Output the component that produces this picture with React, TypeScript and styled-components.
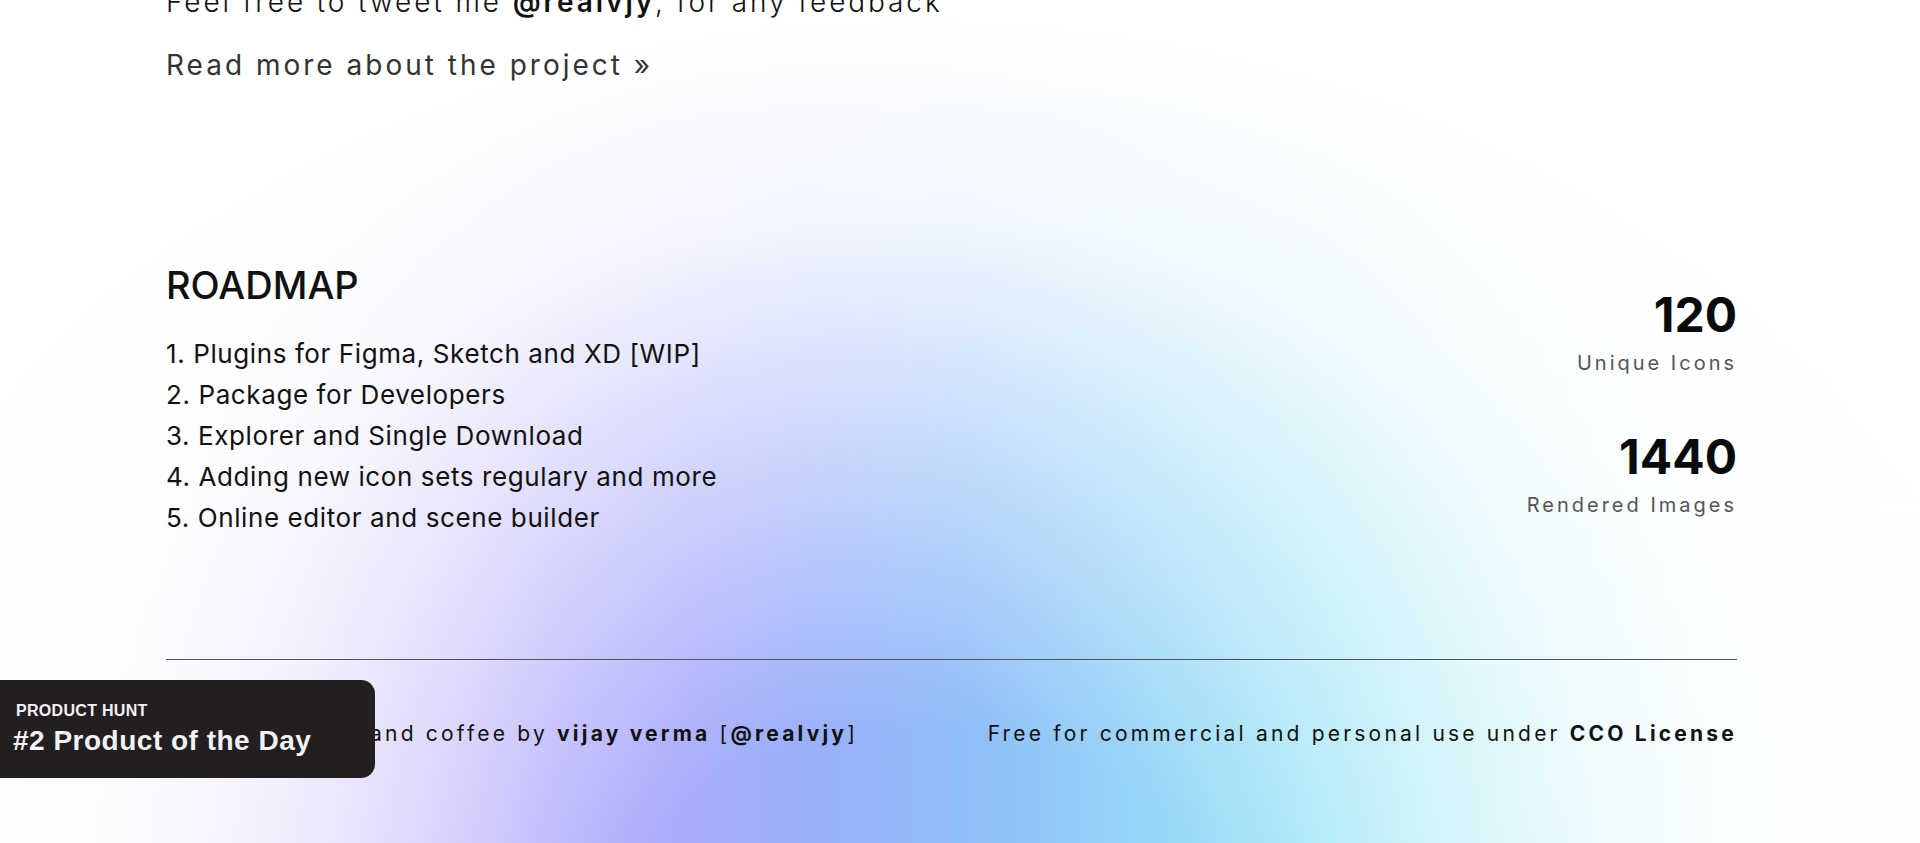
import React from "react";
import styled, { createGlobalStyle } from "styled-components";

const GlobalStyle = createGlobalStyle`
  html, body {
    margin: 0;
    padding: 0;
  }
  body {
    font-family: "Inter", "Noto Sans", sans-serif;
    color: #111;
  }
`;

const Page = styled.div`
  position: relative;
  height: 843px;
  overflow: hidden;
  background:
    radial-gradient(
      ellipse 1180px 980px at 920px 1000px,
      rgba(255, 255, 255, 0) 0%,
      rgba(255, 255, 255, 0) 28%,
      rgba(255, 255, 255, 0.5) 58%,
      rgba(255, 255, 255, 0.88) 80%,
      #fff 100%
    ),
    linear-gradient(
      90deg,
      #ffffff 0%,
      #f4f1fe 7.8%,
      #e2dcfd 15.6%,
      #cdc4fc 23%,
      #b8b4fc 29%,
      #a8acfc 36%,
      #9bb0fb 42%,
      #90bdf9 50%,
      #98d6f8 60%,
      #a8e8f8 69%,
      #c8f3fa 78%,
      #ecfcfd 89%,
      #ffffff 100%
    );
`;

const Container = styled.main`
  width: 1571px;
  margin-left: 166px;
  display: flex;
  flex-direction: column;
`;

const Intro = styled.p`
  margin: -18px 0 0;
  font-size: 28px;
  line-height: 40px;
  font-weight: 300;
  letter-spacing: 2.9px;
  color: #111;

  b {
    font-weight: 600;
  }
`;

const ReadMore = styled.a`
  margin-top: 23px;
  font-size: 28px;
  line-height: 40px;
  letter-spacing: 3px;
  color: #333;
  text-decoration: none;
`;

const Roadmap = styled.section`
  margin-top: 177px;
  display: flex;
  justify-content: space-between;
  align-items: flex-start;
`;

const Heading = styled.h2`
  margin: 0;
  font-size: 38px;
  line-height: 46px;
  font-weight: 500;
`;

const List = styled.ol`
  margin: 25px 0 0;
  padding: 0;
  list-style: none;
`;

const Item = styled.li`
  font-size: 26px;
  line-height: 41px;
  letter-spacing: 0.6px;
  color: #111;
`;

const Stats = styled.div`
  margin-top: 25px;
  display: flex;
  flex-direction: column;
  align-items: flex-end;
  gap: 52px;
`;

const Stat = styled.div`
  display: flex;
  flex-direction: column;
  align-items: flex-end;
  gap: 6px;
`;

const StatValue = styled.span`
  font-size: 48px;
  line-height: 56px;
  font-weight: 700;
  color: #0a0a0a;
`;

const StatLabel = styled.span`
  font-size: 20px;
  line-height: 28px;
  letter-spacing: 3px;
  color: #555;
`;

const Divider = styled.hr`
  margin: 121px 0 0;
  border: 0;
  border-top: 1px solid #555;
`;

const Footer = styled.footer`
  margin-top: 59px;
  display: flex;
  justify-content: space-between;
  font-size: 21px;
  line-height: 30px;
  letter-spacing: 3.2px;
  color: #111;

  b {
    font-weight: 700;
  }
`;

const Badge = styled.a`
  position: fixed;
  left: 0;
  top: 680px;
  width: 375px;
  height: 98px;
  box-sizing: border-box;
  padding: 22px 13px 0;
  background: #231f20;
  border-radius: 0 14px 14px 0;
  font-family: "Liberation Sans", Arial, sans-serif;
  color: #f3f2f7;
  text-decoration: none;
  display: flex;
  flex-direction: column;
`;

const BadgeKicker = styled.span`
  padding-left: 3px;
  font-size: 16px;
  line-height: 18px;
  font-weight: 700;
  letter-spacing: 0.3px;
`;

const BadgeTitle = styled.span`
  margin-top: 5px;
  font-size: 28px;
  line-height: 32px;
  font-weight: 700;
  letter-spacing: 0.5px;
`;

const roadmap = [
  "1. Plugins for Figma, Sketch and XD [WIP]",
  "2. Package for Developers",
  "3. Explorer and Single Download",
  "4. Adding new icon sets regulary and more",
  "5. Online editor and scene builder",
];

const stats = [
  { value: "120", label: "Unique Icons" },
  { value: "1440", label: "Rendered Images" },
];

export default function App() {
  return (
    <Page>
      <GlobalStyle />
      <Container>
        <Intro>
          Feel free to tweet me <b>@realvjy</b>, for any feedback
        </Intro>
        <ReadMore href="#">Read more about the project »</ReadMore>

        <Roadmap>
          <div>
            <Heading>ROADMAP</Heading>
            <List>
              {roadmap.map((r) => (
                <Item key={r}>{r}</Item>
              ))}
            </List>
          </div>
          <Stats>
            {stats.map((s) => (
              <Stat key={s.label}>
                <StatValue>{s.value}</StatValue>
                <StatLabel>{s.label}</StatLabel>
              </Stat>
            ))}
          </Stats>
        </Roadmap>

        <Divider />

        <Footer>
          <span>
            Made with love and coffee by <b>vijay verma</b> [<b>@realvjy</b>]
          </span>
          <span>
            Free for commercial and personal use under <b>CCO License</b>
          </span>
        </Footer>
      </Container>

      <Badge href="#">
        <BadgeKicker>PRODUCT HUNT</BadgeKicker>
        <BadgeTitle>#2 Product of the Day</BadgeTitle>
      </Badge>
    </Page>
  );
}
